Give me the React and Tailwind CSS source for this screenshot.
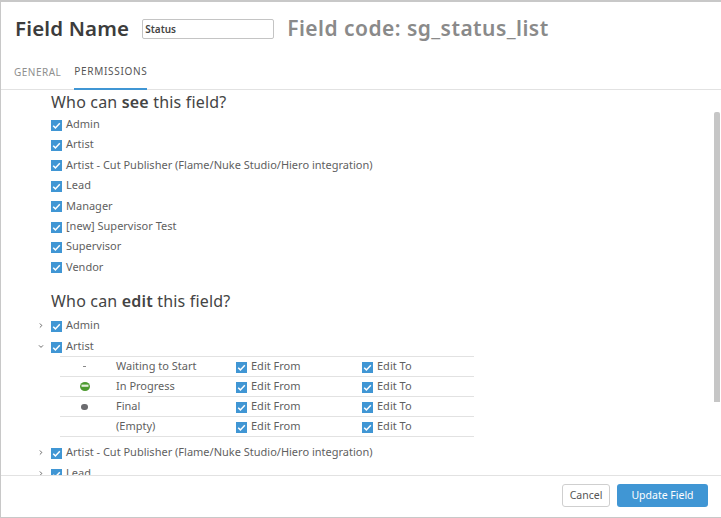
import React from "react";
import { ChevronRight, ChevronDown } from "lucide-react";

const seeRoles = [
  "Admin",
  "Artist",
  "Artist - Cut Publisher (Flame/Nuke Studio/Hiero integration)",
  "Lead",
  "Manager",
  "[new] Supervisor Test",
  "Supervisor",
  "Vendor",
];

const statuses = [
  { name: "Waiting to Start", icon: "dash" },
  { name: "In Progress", icon: "progress" },
  { name: "Final", icon: "final" },
  { name: "(Empty)", icon: null },
];

function Check() {
  return (
    <span className="mt-[2px] flex h-[11px] w-[11px] shrink-0 items-center justify-center bg-[#4096d4]">
      <svg width="9" height="9" viewBox="0 0 9 9" fill="none">
        <path d="M1.2 4.8 L3.4 6.9 L7.8 2.3" stroke="#fff" strokeWidth="1.5" />
      </svg>
    </span>
  );
}

function CheckRow({ label, className = "" }) {
  return (
    <div className={`flex h-[20.4px] items-center gap-[4px] ${className}`}>
      <Check />
      <span>{label}</span>
    </div>
  );
}

function StatusIcon({ icon }) {
  if (icon === "dash") return <span className="h-px w-[3px] bg-[#888]" />;
  if (icon === "progress")
    return (
      <svg width="10" height="9" viewBox="0 0 10 9">
        <ellipse cx="5" cy="4.5" rx="5" ry="4.5" fill="#4c9a2f" />
        <rect x="1.5" y="2.6" width="7" height="2.2" fill="#e4efdc" />
      </svg>
    );
  if (icon === "final") return <span className="h-[6px] w-[7px] rounded-full bg-[#6b6b6f]" />;
  return null;
}

function ExpandableRole({ label, open }) {
  const Icon = open ? ChevronDown : ChevronRight;
  return (
    <div className="-ml-[15px] flex h-[21px] items-center">
      <Icon size={7} strokeWidth={3} className="mr-[5px] w-[10px] text-[#555]" />
      <CheckRow label={label} />
    </div>
  );
}

export default function App() {
  return (
    <div
      className="flex h-[518px] w-[721px] flex-col overflow-hidden border-t-2 border-b border-l border-[#c8c8c8] bg-white text-[11px] text-[#5f5f5f]"
      style={{ fontFamily: '"Noto Sans", sans-serif' }}
    >
      {/* Title bar */}
      <header className="flex h-[53px] shrink-0 items-center pl-[14px]">
        <h1 className="text-[20.5px] font-semibold tracking-[0.15px] text-[#3c3c3c]">Field Name</h1>
        <input
          readOnly
          value="Status"
          className="ml-[13px] h-[20px] w-[132px] rounded-[2px] border border-[#c4c4c4] px-[2px] text-[10px] font-semibold text-[#444] outline-none"
        />
        <span className="ml-[13px] text-[21px] font-semibold tracking-[0.45px] text-[#8a8a8a]">
          Field code: sg_status_list
        </span>
      </header>

      {/* Tabs */}
      <nav className="flex h-[35px] shrink-0 items-end gap-[13px] border-b border-[#e2e2e2] pl-[13px] text-[10px] tracking-[0.5px]">
        <div className="flex h-full items-start pt-[10px] text-[#8f8f8f]">GENERAL</div>
        <div className="-mb-px flex h-[36px] items-start border-b-2 border-[#4096d4] pt-[10px] tracking-[0.68px] text-[#555]">
          PERMISSIONS
        </div>
      </nav>

      {/* Permission lists */}
      <main className="relative min-h-0 flex-1 overflow-hidden pl-[50px]">
        <h2 className="h-[24px] text-[16px] leading-[24px] tracking-[0.18px] text-[#444]">
          Who can <b className="font-semibold">see</b> this field?
        </h2>
        <div>
          {seeRoles.map((role) => (
            <CheckRow key={role} label={role} />
          ))}
        </div>
        <h2 className="mt-[12px] h-[26px] text-[16px] leading-[24px] tracking-[0.18px] text-[#444]">
          Who can <b className="font-semibold">edit</b> this field?
        </h2>
        <ExpandableRole label="Admin" />
        <ExpandableRole label="Artist" open />
        <div className="-mt-px ml-[9px] w-[414px] border-t border-[#e2e2e2]">
          {statuses.map((s) => (
            <div key={s.name} className="flex h-[20px] items-center border-b border-[#e2e2e2]">
              <div className="flex w-[50px] justify-center pr-[1px]">
                <StatusIcon icon={s.icon} />
              </div>
              <div className="w-[126px] pl-[6px]">{s.name}</div>
              <CheckRow label="Edit From" className="w-[126px]" />
              <CheckRow label="Edit To" />
            </div>
          ))}
        </div>
        <div className="h-[5px]" />
        <ExpandableRole label="Artist - Cut Publisher (Flame/Nuke Studio/Hiero integration)" />
        <ExpandableRole label="Lead" />

        {/* Scroll thumb */}
        <div className="absolute top-[22px] right-[1px] h-[290px] w-[6px] rounded-t-[2px] bg-[#c6c6c6]" />
      </main>

      {/* Actions */}
      <footer className="flex h-[42px] shrink-0 items-start justify-end gap-[7px] border-t border-[#e2e2e2] pt-[8px] pr-[13px]">
        <button className="h-[23px] w-[48px] rounded-[3px] border border-[#cfcfcf] text-[10.5px] text-[#555]">
          Cancel
        </button>
        <button className="h-[23px] w-[91px] rounded-[3px] bg-[#4096d4] text-[10.5px] text-white">
          Update Field
        </button>
      </footer>
    </div>
  );
}
